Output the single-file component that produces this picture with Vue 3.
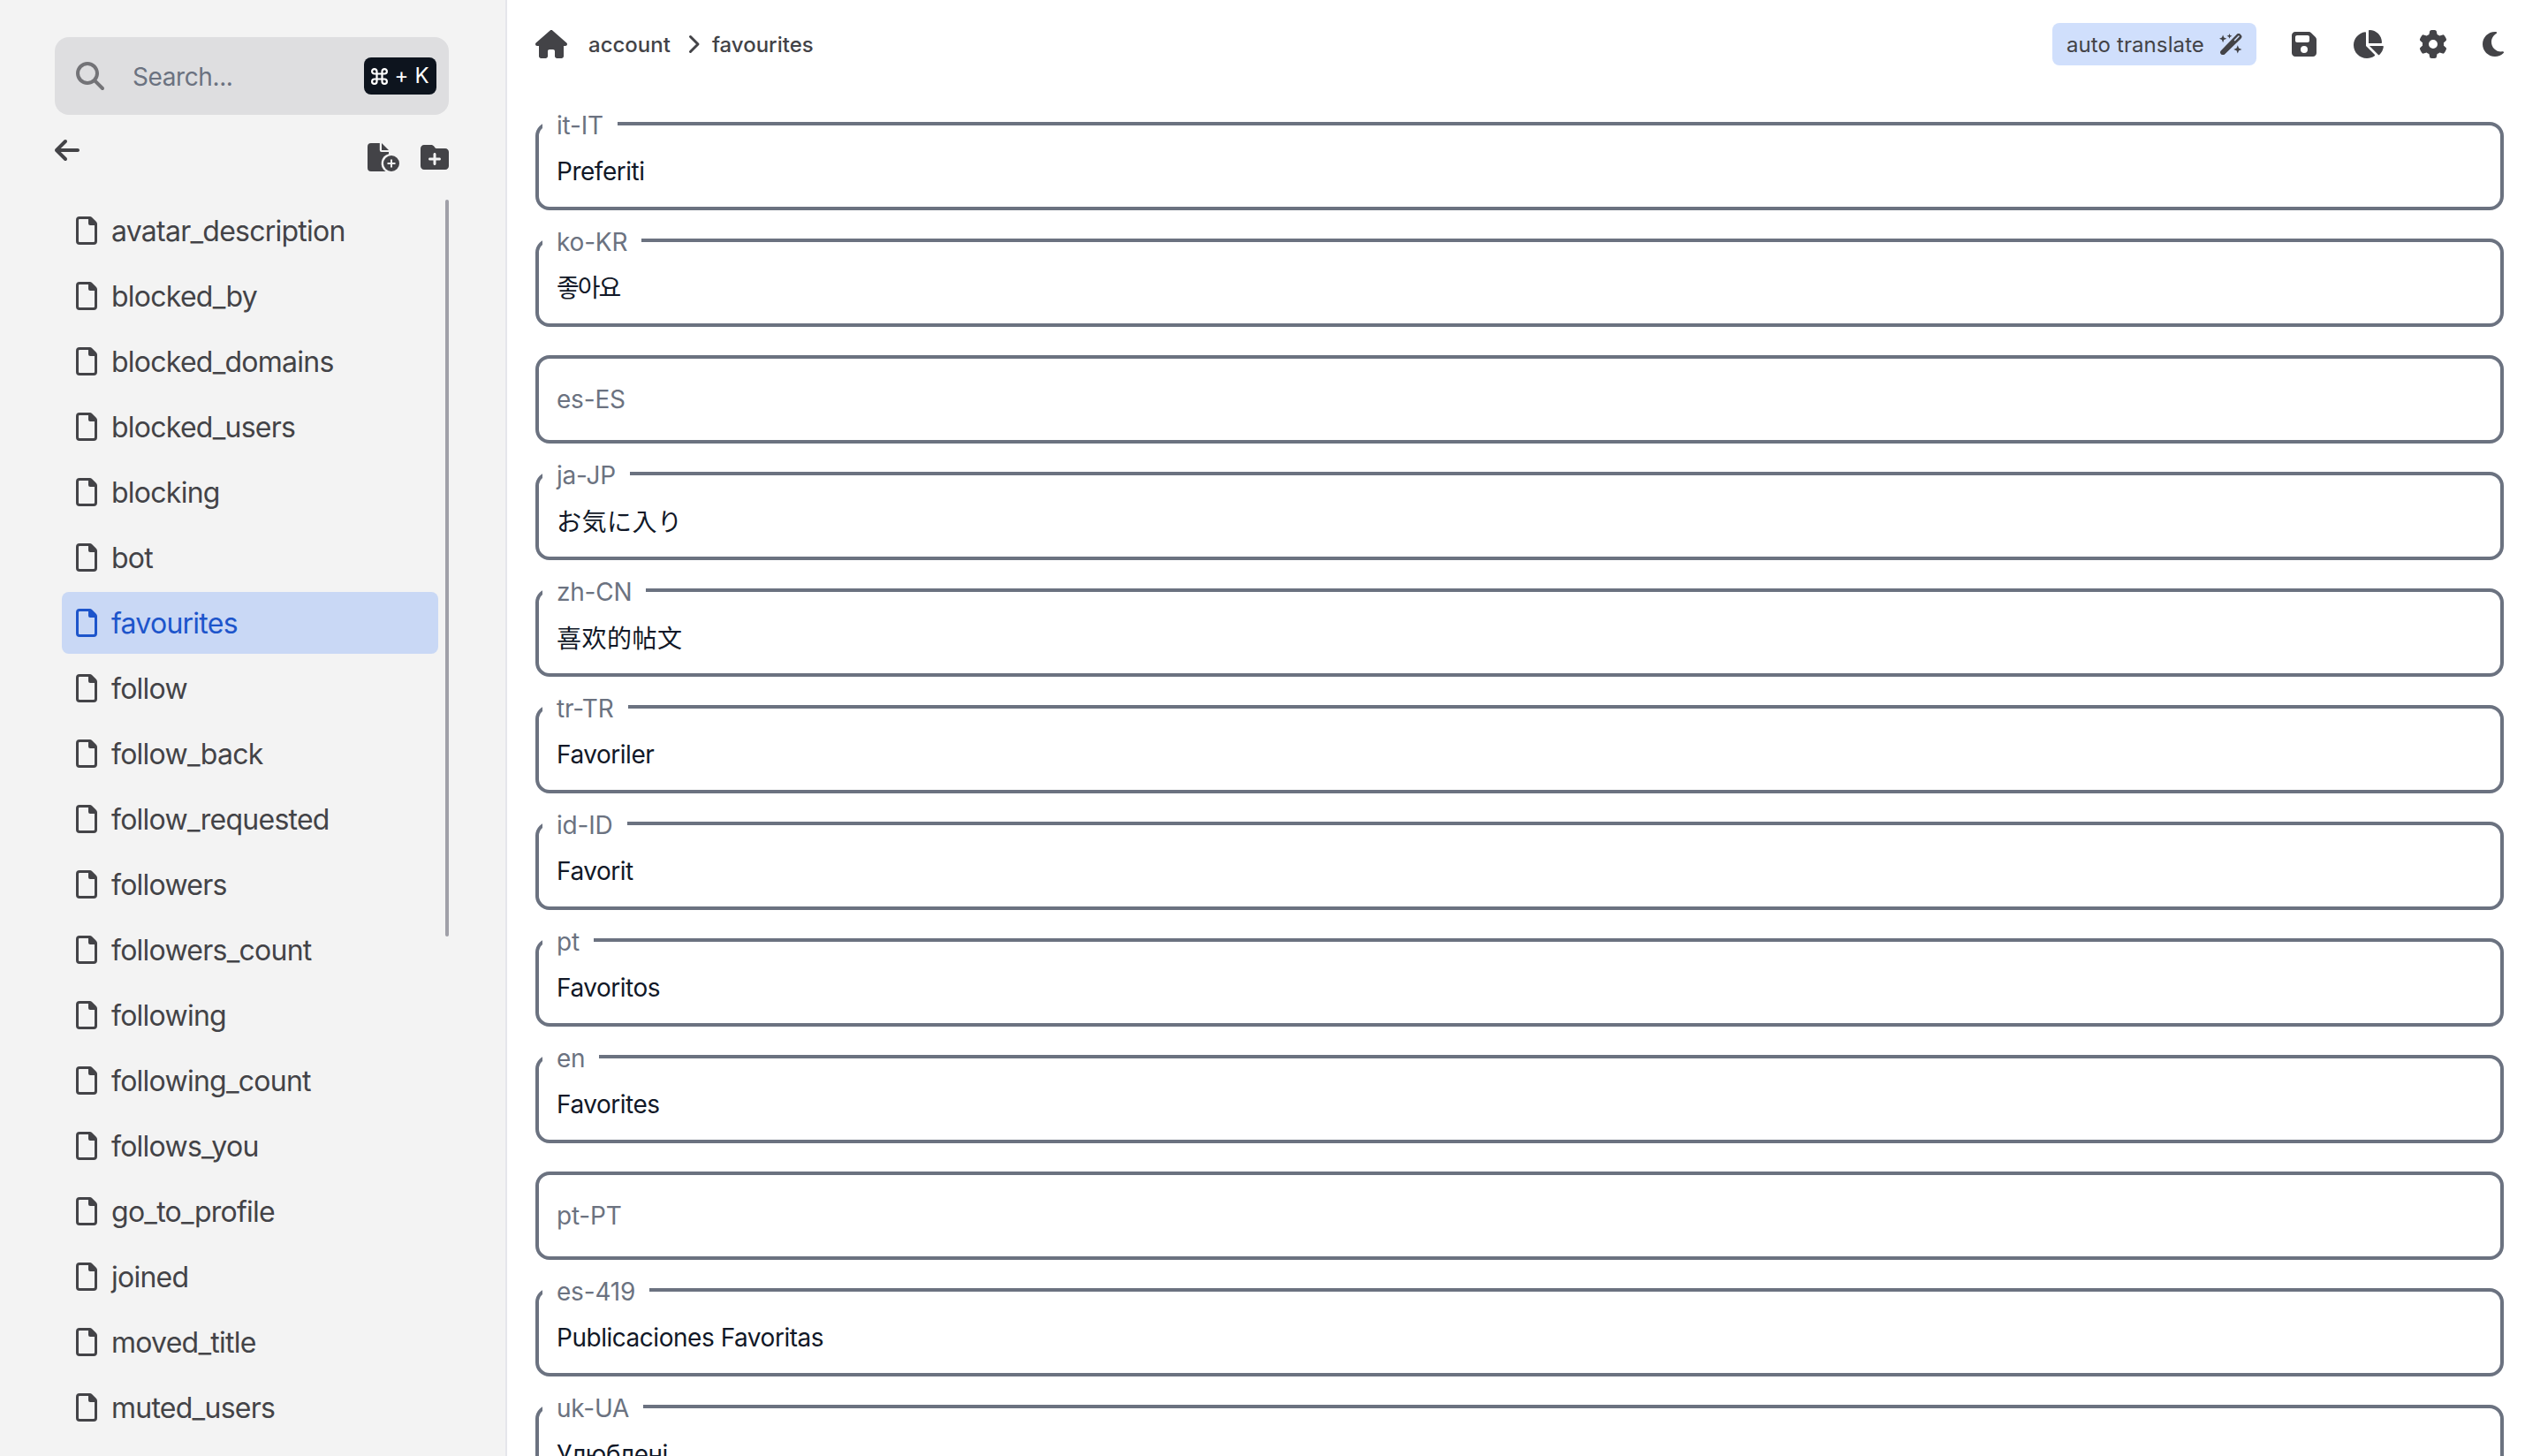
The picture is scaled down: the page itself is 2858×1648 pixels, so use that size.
<script setup>
import { ref } from 'vue'

const search = ref('')
const activeKey = ref('favourites')

const keys = [
    'avatar_description',
    'blocked_by',
    'blocked_domains',
    'blocked_users',
    'blocking',
    'bot',
    'favourites',
    'follow',
    'follow_back',
    'follow_requested',
    'followers',
    'followers_count',
    'following',
    'following_count',
    'follows_you',
    'go_to_profile',
    'joined',
    'moved_title',
    'muted_users',
]

const fields = ref([
    { locale: 'it-IT', value: 'Preferiti' },
    { locale: 'ko-KR', value: '좋아요' },
    { locale: 'es-ES', value: '' },
    { locale: 'ja-JP', value: 'お気に入り' },
    { locale: 'zh-CN', value: '喜欢的帖文' },
    { locale: 'tr-TR', value: 'Favoriler' },
    { locale: 'id-ID', value: 'Favorit' },
    { locale: 'pt', value: 'Favoritos' },
    { locale: 'en', value: 'Favorites' },
    { locale: 'pt-PT', value: '' },
    { locale: 'es-419', value: 'Publicaciones Favoritas' },
    { locale: 'uk-UA', value: 'Улюблені' },
])
</script>

<template>
    <div class="layout">
        <aside class="sidebar">
            <div class="search">
                <svg class="search-icon" width="32" height="32" viewBox="0 0 512 512">
                    <path d="M416 208c0 45.9-14.9 88.3-40 122.7L502.6 457.4c12.5 12.5 12.5 32.8 0 45.3s-32.8 12.5-45.3 0L330.7 376c-34.4 25.2-76.8 40-122.7 40C93.1 416 0 322.9 0 208S93.1 0 208 0S416 93.1 416 208zM208 352a144 144 0 1 0 0-288 144 144 0 1 0 0 288z" />
                </svg>
                <input v-model="search" type="text" placeholder="Search...">
                <div class="kbd">
                    <svg width="19" height="19" viewBox="0 0 19 19">
                        <path d="M6.5 6.5V3.8a2.7 2.7 0 1 0-2.7 2.7h11.4a2.7 2.7 0 1 0-2.7-2.7v11.4a2.7 2.7 0 1 0 2.7-2.7H3.8a2.7 2.7 0 1 0 2.7 2.7z" />
                    </svg>
                    <span>+</span>
                    <span>K</span>
                </div>
            </div>

            <div class="tools">
                <svg class="back" width="28" height="32" viewBox="0 0 448 512">
                    <path d="M9.4 233.4c-12.5 12.5-12.5 32.8 0 45.3l160 160c12.5 12.5 32.8 12.5 45.3 0s12.5-32.8 0-45.3L109.2 288 416 288c17.7 0 32-14.3 32-32s-14.3-32-32-32l-306.7 0L214.6 118.6c12.5-12.5 12.5-32.8 0-45.3s-32.8-12.5-45.3 0l-160 160z" />
                </svg>
                <div class="tools-right">
                    <svg width="36" height="32" viewBox="0 0 36 32">
                        <path d="M4 0h9.8v8a2 2 0 0 0 2 2H24v2.2A11 11 0 0 0 20.5 32H4a4 4 0 0 1-4-4V4a4 4 0 0 1 4-4z" />
                        <path d="M16 0l8 8h-8z" />
                        <path fill-rule="evenodd" d="M27 14a9 9 0 1 1 0 18 9 9 0 0 1 0-18zm-1 4.5V22h-3.5v2H26v3.5h2V24h3.5v-2H28v-3.5z" />
                    </svg>
                    <svg width="32" height="32" viewBox="0 0 512 512">
                        <path d="M512 416c0 35.3-28.7 64-64 64H64c-35.3 0-64-28.7-64-64V96C0 60.7 28.7 32 64 32H192c20.1 0 39.1 9.5 51.2 25.6l19.2 25.6c6 8.1 15.5 12.8 25.6 12.8H448c35.3 0 64 28.7 64 64V416zM232 376c0 13.3 10.7 24 24 24s24-10.7 24-24V312h64c13.3 0 24-10.7 24-24s-10.7-24-24-24H280V200c0-13.3-10.7-24-24-24s-24 10.7-24 24v64H168c-13.3 0-24 10.7-24 24s10.7 24 24 24h64v64z" />
                    </svg>
                </div>
            </div>

            <div class="keys-wrap">
                <ul class="keys">
                    <li
                        v-for="key in keys"
                        :key="key"
                        class="key"
                        :class="{ active: key === activeKey }"
                        @click="activeKey = key"
                    >
                        <svg width="24" height="32" viewBox="0 0 24 32">
                            <path fill-rule="evenodd" d="M4 0h11.5a4 4 0 0 1 2.8 1.2l4.5 4.5A4 4 0 0 1 24 8.5V28a4 4 0 0 1-4 4H4a4 4 0 0 1-4-4V4a4 4 0 0 1 4-4zM4 3a1 1 0 0 0-1 1v24a1 1 0 0 0 1 1h16a1 1 0 0 0 1-1V10h-5a2 2 0 0 1-2-2V3z" />
                        </svg>
                        <span>{{ key }}</span>
                    </li>
                </ul>
                <div class="scrollbar"></div>
            </div>
        </aside>

        <main class="main">
            <header class="header">
                <div class="crumbs">
                    <svg class="home" width="36" height="32" viewBox="0 0 576 512">
                        <path d="M575.8 255.5c0 18-15 32.1-32 32.1h-32l.7 160.2c0 2.7-.2 5.4-.5 8.1V472c0 22.1-17.9 40-40 40H456c-1.1 0-2.2 0-3.3-.1c-1.4 .1-2.8 .1-4.2 .1H416 392c-22.1 0-40-17.9-40-40V448 384c0-17.7-14.3-32-32-32H256c-17.7 0-32 14.3-32 32v64 24c0 22.1-17.9 40-40 40H160 128.1c-1.5 0-3-.1-4.5-.2c-1.2 .1-2.4 .2-3.6 .2H104c-22.1 0-40-17.9-40-40V360c0-.9 0-1.9 .1-2.8V287.6H32c-18 0-32-14-32-32.1c0-9 3-17 10-24L266.4 8c7-7 15-8 22-8s15 2 21 7L564.8 231.5c8 7 12 15 11 24z" />
                    </svg>
                    <span class="crumb">account</span>
                    <svg class="chevron" width="14" height="22" viewBox="0 0 14 22">
                        <path d="M2.5 2.5l8.5 8.5-8.5 8.5" />
                    </svg>
                    <span class="crumb">favourites</span>
                </div>

                <div class="actions">
                    <button class="translate" type="button">
                        <span>auto translate</span>
                        <svg width="26" height="24" viewBox="0 0 26 24">
                            <path fill-rule="evenodd" d="M1.9 19.2L19.6 1a3.1 3.1 0 0 1 4.4 0l.4.4a3.1 3.1 0 0 1 0 4.4L6.3 23.2a3.1 3.1 0 0 1-4.4 0 2.9 2.9 0 0 1 0-4zM17.7 8.5l4.9-4.9a.8.8 0 0 0-1.1-1.1l-4.9 4.9z" />
                            <path d="M4.1 1.5l1.2 3 3 1.3-3 1.2-1.2 3.2L2.9 7 0 5.8l2.9-1.3zM11.5 0l.8 2 2.2.8-2.2.9-.8 2.1-.8-2.1-2.2-.9 2.2-.8zM20.8 13.3l1.3 3.3 3.4 1.3-3.4 1.3-1.3 3.3-1.3-3.3-3.2-1.3 3.2-1.3z" />
                        </svg>
                    </button>
                    <svg width="28" height="32" viewBox="0 0 448 512">
                        <path d="M64 32C28.7 32 0 60.7 0 96V416c0 35.3 28.7 64 64 64H384c35.3 0 64-28.7 64-64V173.3c0-17-6.7-33.3-18.7-45.3L352 50.7C340 38.7 323.7 32 306.7 32H64zm0 96c0-17.7 14.3-32 32-32H288c17.7 0 32 14.3 32 32v64c0 17.7-14.3 32-32 32H96c-17.7 0-32-14.3-32-32V128zM224 288a64 64 0 1 1 0 128 64 64 0 1 1 0-128z" />
                    </svg>
                    <svg width="36" height="32" viewBox="0 0 576 512">
                        <path d="M304 240V16.6c0-9 7-16.6 16-16.6C443.7 0 544 100.3 544 224c0 9-7.6 16-16.6 16H304zM32 272C32 150.7 122.1 50.3 239 34.3c9.2-1.3 17 6.1 17 15.4V288L412.5 444.5c6.7 6.7 6.2 17.7-1.5 23.1C371.8 495.6 323.8 512 272 512C139.5 512 32 404.6 32 272zm526.4 16c9.3 0 16.6 7.8 15.4 17c-7.7 55.9-34.6 105.6-73.9 142.3c-6 5.6-15.4 5.2-21.2-.7L320 288H558.4z" />
                    </svg>
                    <svg width="32" height="32" viewBox="0 0 512 512">
                        <path d="M495.9 166.6c3.2 8.7 .5 18.4-6.4 24.6l-43.3 39.4c1.1 8.3 1.7 16.8 1.7 25.4s-.6 17.1-1.7 25.4l43.3 39.4c6.9 6.2 9.6 15.9 6.4 24.6c-4.4 11.9-9.7 23.3-15.8 34.3l-4.7 8.1c-6.6 11-14 21.4-22.1 31.2c-5.9 7.2-15.7 9.6-24.5 6.8l-55.7-17.7c-13.4 10.3-28.2 18.9-44 25.4l-12.5 57.1c-2 9.1-9 16.3-18.2 17.8c-13.8 2.3-28 3.5-42.5 3.5s-28.7-1.2-42.5-3.5c-9.2-1.5-16.2-8.7-18.2-17.8l-12.5-57.1c-15.8-6.5-30.6-15.1-44-25.4L83.1 425.9c-8.8 2.8-18.6 .3-24.5-6.8c-8.1-9.8-15.5-20.2-22.1-31.2l-4.7-8.1c-6.1-11-11.4-22.4-15.8-34.3c-3.2-8.7-.5-18.4 6.4-24.6l43.3-39.4C64.6 273.1 64 264.6 64 256s.6-17.1 1.7-25.4L22.4 191.2c-6.9-6.2-9.6-15.9-6.4-24.6c4.4-11.9 9.7-23.3 15.8-34.3l4.7-8.1c6.6-11 14-21.4 22.1-31.2c5.9-7.2 15.7-9.6 24.5-6.8l55.7 17.7c13.4-10.3 28.2-18.9 44-25.4l12.5-57.1c2-9.1 9-16.3 18.2-17.8C227.3 1.2 241.5 0 256 0s28.7 1.2 42.5 3.5c9.2 1.5 16.2 8.7 18.2 17.8l12.5 57.1c15.8 6.5 30.6 15.1 44 25.4l55.7-17.7c8.8-2.8 18.6-.3 24.5 6.8c8.1 9.8 15.5 20.2 22.1 31.2l4.7 8.1c6.1 11 11.4 22.4 15.8 34.3zM256 336a80 80 0 1 0 0-160 80 80 0 1 0 0 160z" />
                    </svg>
                    <svg width="24" height="32" viewBox="0 0 384 512">
                        <path d="M223.5 32C100 32 0 132.3 0 256S100 480 223.5 480c60.6 0 115.5-24.2 155.8-63.4c5-4.9 6.3-12.5 3.1-18.7s-10.1-9.7-17-8.5c-9.8 1.7-19.8 2.6-30.1 2.6c-96.9 0-175.5-78.8-175.5-176c0-65.8 36-123.1 89.3-153.3c6.1-3.5 9.2-10.5 7.7-17.3s-7.3-11.9-14.3-12.5c-6.3-.5-12.6-.8-19-.8z" />
                    </svg>
                </div>
            </header>

            <div class="fields">
                <div
                    v-for="field in fields"
                    :key="field.locale"
                    class="field"
                    :class="{ filled: field.value }"
                >
                    <input v-model="field.value" :lang="field.locale" type="text">
                    <label>{{ field.locale }}</label>
                </div>
            </div>
        </main>
    </div>
</template>

<style>
    body {
        margin: 0;
        overflow: hidden;
    }
</style>

<style scoped>
    .layout {
        display: flex;
        height: 1648px;
        overflow: hidden;
        background-color: #fff;
        color: #434347;
        font-family: Inter, "Noto Sans CJK JP", sans-serif;
    }
    svg {
        display: block;
        flex-shrink: 0;
        fill: currentColor;
    }
    input {
        border: none;
        outline: none;
        background: none;
        font-family: inherit;
    }

    .sidebar {
        display: flex;
        flex-direction: column;
        box-sizing: border-box;
        width: 574px;
        flex-shrink: 0;
        padding: 42px 64px 0 62px;
        background-color: #f3f3f3;
        border-right: 2px solid #e5e6eb;
    }
    .search {
        display: flex;
        align-items: center;
        box-sizing: border-box;
        height: 88px;
        flex-shrink: 0;
        padding: 0 14px 0 24px;
        border-radius: 16px;
        background-color: #dedee0;
    }
    .search-icon {
        color: #737377;
    }
    .search input {
        flex: 1;
        min-width: 0;
        height: 60px;
        padding: 2px 0 0;
        margin-left: 32px;
        font-size: 28px;
        letter-spacing: -0.4px;
    }
    .search input::placeholder {
        color: #6b7280;
        opacity: 1;
    }
    .kbd {
        display: flex;
        align-items: center;
        justify-content: center;
        gap: 7px;
        width: 82px;
        height: 42px;
        border-radius: 8px;
        background-color: #0d141e;
        color: #fff;
        font-size: 24px;
        line-height: 42px;
    }
    .kbd svg {
        fill: none;
        stroke: currentColor;
        stroke-width: 2.2;
    }

    .tools {
        display: flex;
        justify-content: space-between;
        height: 96px;
        flex-shrink: 0;
    }
    .back {
        margin-top: 24px;
    }
    .tools-right {
        display: flex;
        gap: 24px;
        margin-top: 32px;
    }

    .keys-wrap {
        display: flex;
        justify-content: space-between;
        align-items: flex-start;
    }
    .keys {
        display: flex;
        flex-direction: column;
        gap: 4px;
        width: 426px;
        margin: 0 0 0 8px;
        padding: 0;
        list-style: none;
    }
    .key {
        display: flex;
        align-items: center;
        gap: 16px;
        box-sizing: border-box;
        height: 70px;
        padding: 0 16px;
        border-radius: 8px;
        font-size: 32px;
        line-height: 48px;
        letter-spacing: -0.75px;
        cursor: pointer;
    }
    .key span {
        padding-top: 1px;
    }
    .key.active {
        background-color: #c9d8f5;
        color: #1d55cb;
    }
    .scrollbar {
        width: 4px;
        height: 834px;
        border-radius: 2px;
        background-color: #a0a0a8;
    }

    .main {
        flex: 1;
        min-width: 0;
        padding: 26px 24px 0 32px;
    }
    .header {
        display: flex;
        align-items: center;
        justify-content: space-between;
        height: 48px;
        margin-bottom: 64px;
    }
    .crumbs {
        display: flex;
        align-items: center;
    }
    .crumb {
        font-size: 24px;
        font-weight: 500;
    }
    .home {
        margin-right: 24px;
    }
    .chevron {
        margin: 0 13px 0 20px;
        fill: none;
        stroke: currentColor;
        stroke-width: 3;
        stroke-linecap: round;
        stroke-linejoin: round;
    }
    .actions {
        display: flex;
        align-items: center;
        gap: 40px;
    }
    .translate {
        display: flex;
        align-items: center;
        justify-content: space-between;
        box-sizing: border-box;
        width: 231px;
        height: 48px;
        padding: 0 16px;
        border: none;
        border-radius: 8px;
        background-color: #d0dffc;
        color: inherit;
        font-family: inherit;
        font-size: 24px;
        letter-spacing: 0.1px;
        cursor: pointer;
    }

    .fields {
        display: flex;
        flex-direction: column;
        gap: 32px;
    }
    .field {
        position: relative;
        box-sizing: border-box;
        height: 100px;
        flex-shrink: 0;
        border: 4px solid #6b7280;
        border-radius: 16px;
    }
    .field input {
        box-sizing: border-box;
        width: 100%;
        height: 92px;
        padding: 20px 20px 8px;
        color: #111827;
        font-size: 28px;
        letter-spacing: -0.47px;
    }
    .field input:lang(ko) {
        padding-bottom: 12px;
        font-family: Inter, "Noto Sans CJK KR", sans-serif;
        letter-spacing: -2px;
    }
    .field input:lang(ja) {
        padding-bottom: 11px;
        letter-spacing: 0.5px;
    }
    .field input:lang(zh) {
        padding-bottom: 11px;
        font-family: Inter, "Noto Sans CJK SC", sans-serif;
        letter-spacing: 0.5px;
    }
    /* the label sits inside an empty field and cuts the border of a filled one */
    .field label {
        position: absolute;
        top: 26px;
        left: 4px;
        padding: 0 16px;
        color: #6b7280;
        font-size: 28px;
        line-height: 40px;
        letter-spacing: -0.2px;
    }
    .field.filled label {
        top: -20px;
        background-color: #fff;
    }
</style>
